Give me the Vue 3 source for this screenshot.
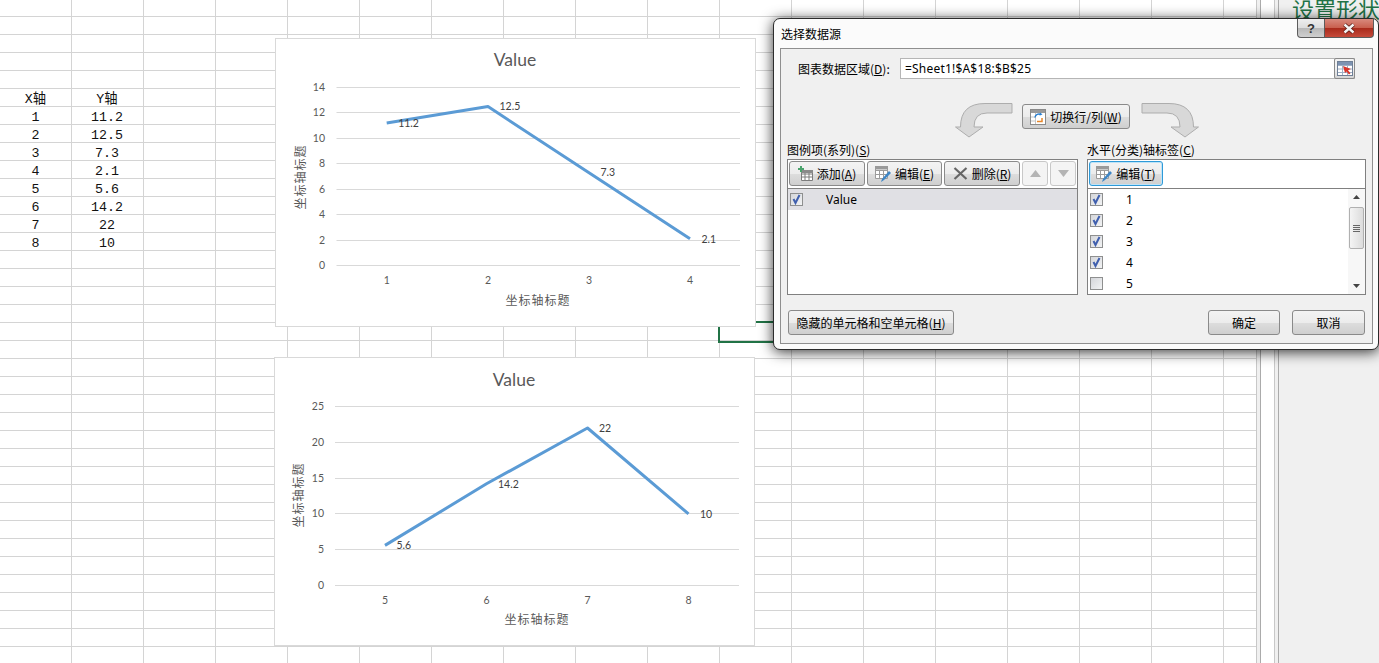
<script setup>
const rows = [
  ['X轴', 'Y轴'], ['1', '11.2'], ['2', '12.5'], ['3', '7.3'], ['4', '2.1'],
  ['5', '5.6'], ['6', '14.2'], ['7', '22'], ['8', '10']
]

function build(cls, cfg) {
  const y = v => cfg.y0 - (v / cfg.max) * (cfg.y0 - cfg.yTop)
  const pts = cfg.values.map((v, i) => ({ x: cfg.xs[i], y: y(v), v, cat: cfg.cats[i] }))
  const ticks = []
  for (let t = 0; t <= cfg.max; t += cfg.step) ticks.push({ t, y: Math.floor(y(t)) + 0.5 })
  return { cls, ...cfg, pts, ticks, line: pts.map(p => `${p.x},${p.y.toFixed(1)}`).join(' ') }
}

const charts = [
  build('chart-a', {
    max: 14, step: 2, y0: 226.5, yTop: 48.5, left: 60.5, right: 464, titleY: 27, catY: 241, nameX: 25, nameY: 138,
    xs: [110.7, 212, 313, 414], values: [11.2, 12.5, 7.3, 2.1], cats: [1, 2, 3, 4]
  }),
  build('chart-b', {
    max: 25, step: 5, y0: 227.5, yTop: 48.5, left: 60, right: 464, titleY: 28, catY: 242, nameX: 24, nameY: 137,
    xs: [110, 211.5, 312.5, 413.5], values: [5.6, 14.2, 22, 10], cats: [5, 6, 7, 8]
  })
]

const axisItems = [
  { n: 1, on: true }, { n: 2, on: true }, { n: 3, on: true }, { n: 4, on: true }, { n: 5, on: false }
]
</script>

<template>
  <div class="app">
    <div class="sheet">
      <div class="cells">
        <template v-for="(r, i) in rows" :key="i">
          <div class="cell">{{ r[0] }}</div>
          <div class="cell">{{ r[1] }}</div>
        </template>
      </div>
    </div>
    <div class="splitter"><div class="splitter-in"></div></div>
    <aside class="pane"><h2 class="pane-title">设置形状格式</h2></aside>

    <div class="selection"></div>

    <div v-for="c in charts" :key="c.cls" class="chart" :class="c.cls">
      <svg width="481" height="287" class="plot">
        <text x="239" :y="c.titleY" text-anchor="middle" class="c-title">Value</text>
        <g v-for="t in c.ticks" :key="t.t">
          <line :x1="c.left" :x2="c.right" :y1="t.y" :y2="t.y" stroke="#d9d9d9" />
          <text x="49" :y="t.y - 0.5" dy=".36em" text-anchor="end" class="c-axis">{{ t.t }}</text>
        </g>
        <polyline :points="c.line" fill="none" stroke="#5b9bd5" stroke-width="3" stroke-linejoin="round" />
        <g v-for="p in c.pts" :key="p.cat">
          <text :x="p.x" :y="c.catY" dy=".36em" text-anchor="middle" class="c-axis">{{ p.cat }}</text>
          <text :x="p.x + 11.5" :y="p.y" dy=".36em" class="c-data">{{ p.v }}</text>
        </g>
        <text x="262" y="262" dy=".36em" text-anchor="middle" class="c-name">坐标轴标题</text>
        <text :transform="`translate(${c.nameX} ${c.nameY}) rotate(-90)`" dy=".36em" text-anchor="middle" class="c-name">坐标轴标题</text>
      </svg>
    </div>

    <section class="dialog">
      <header class="titlebar">
        <span class="dlg-title">选择数据源</span>
        <div class="caption">
          <span class="cap-help">?</span>
          <span class="cap-close">
            <svg width="14" height="11" viewBox="0 0 14 11"><path d="M2.500 1.500l9 8M11.500 1.500l-9 8" fill="none" stroke="#5a1a14" stroke-width="4" /><path d="M2.500 1.500l9 8M11.500 1.500l-9 8" fill="none" stroke="#f4f4f4" stroke-width="2.400" /></svg>
          </span>
        </div>
      </header>
      <div class="body">
        <div class="range-row">
          <label class="range-label">图表数据区域(<u>D</u>):</label>
          <div class="range-field">
            <span class="range-value">=Sheet1!$A$18:$B$25</span>
            <span class="range-btn">
              <svg width="16" height="15" viewBox="0 0 16 15">
                <rect x=".5" y=".5" width="15" height="14" fill="#fff" stroke="#6f7f96" />
                <path d="M1 4.500h14M1 8h14M1 11.500h14M5.500 1v13M10.500 1v13" stroke="#9fb0c6" />
                <rect x="1" y="1" width="14" height="3" fill="#7d93b2" />
                <path d="M6 5l8 3-3 1.200 2.500 3-1.500 1.200-2.500-3L8 12z" fill="#d9352a" />
              </svg>
            </span>
          </div>
        </div>

        <div class="swap-row">
          <svg class="swap-arrow" width="58" height="35" viewBox="0 0 58 35">
            <path d="M57 .5V10H32Q19 10 19 24H28L14 34 .5 24H5.500Q5.500 .5 30 .500Z" fill="#d8d8d8" stroke="#adadad" />
          </svg>
          <button class="btn swap-btn">
            <svg width="16" height="16" viewBox="0 0 16 16">
              <rect x=".5" y=".5" width="15" height="15" fill="#fff" stroke="#8a8a8a" />
              <rect x="1" y="1" width="14" height="3" fill="#9a9a9a" />
              <path d="M1 8h4M1 12h4M5.500 4v11" stroke="#c4c4c4" />
              <path d="M5 8.500a4 4 0 0 1 6-3" fill="none" stroke="#2a7fd0" stroke-width="1.500" />
              <path d="M10 3.500l2.500 2-3 1z" fill="#2a7fd0" />
              <path d="M12 9v3.500H7" fill="none" stroke="#e8862a" stroke-width="1.500" />
            </svg>
            <span>切换行/列(<u>W</u>)</span>
          </button>
          <svg class="swap-arrow" width="58" height="35" viewBox="0 0 58 35">
            <g transform="translate(58 0) scale(-1 1)">
              <path d="M57 .5V10H32Q19 10 19 24H28L14 34 .5 24H5.500Q5.500 .5 30 .500Z" fill="#d8d8d8" stroke="#adadad" />
            </g>
          </svg>
        </div>

        <div class="lists">
          <div class="col col-left">
            <div class="col-label">图例项(系列)(<u>S</u>)</div>
            <div class="panel">
              <div class="toolbar">
                <button class="btn tool w76">
                  <svg width="15" height="15" viewBox="0 0 15 15">
                    <path d="M3.500 4.500h11v10h-11zM3.500 8h11M3.500 11h11M7 5v9M11 5v9" fill="#fff" stroke="#7c7c7c" />
                    <rect x="3" y="4" width="12" height="3" fill="#8a8a8a" />
                    <path d="M3 0v6M0 3h6" stroke="#4aa36c" stroke-width="2" />
                  </svg>
                  <span>添加(<u>A</u>)</span>
                </button>
                <button class="btn tool w75">
                  <svg width="16" height="16" viewBox="0 0 16 16">
                    <path d="M.5 .5h12v12H.5zM.5 4.500h12M.5 8.500h12M4.500 5v8M8.500 5v8" fill="#fff" stroke="#9b9b9b" />
                    <rect x="0" y="0" width="13" height="3.500" fill="#9a9a9a" />
                    <path d="M14 5l2 2-7 7-3 2 1-3z" fill="#3e86c6" />
                  </svg>
                  <span>编辑(<u>E</u>)</span>
                </button>
                <button class="btn tool w76">
                  <svg width="15" height="13" viewBox="0 0 15 13"><path d="M1.500 1l12 11M13.500 1l-12 11" stroke="#666" stroke-width="2.200" /></svg>
                  <span>删除(<u>R</u>)</span>
                </button>
                <button class="btn-dis"><svg width="11" height="7" viewBox="0 0 11 7"><path d="M5.500 0L11 7H0z" fill="#b4b4b4" /></svg></button>
                <button class="btn-dis"><svg width="11" height="7" viewBox="0 0 11 7"><path d="M0 0h11L5.500 7z" fill="#b4b4b4" /></svg></button>
              </div>
              <div class="list">
                <div class="item selected">
                  <span class="check">
                    <svg width="11" height="11" viewBox="0 0 11 11"><path d="M2.500 5l2 4 4-8" fill="none" stroke="#3f5fae" stroke-width="2" /></svg>
                  </span>
                  <span class="item-text">Value</span>
                </div>
              </div>
            </div>
          </div>

          <div class="col col-right">
            <div class="col-label">水平(分类)轴标签(<u>C</u>)</div>
            <div class="panel">
              <div class="toolbar">
                <button class="btn tool w74 focused">
                  <svg width="16" height="16" viewBox="0 0 16 16">
                    <path d="M.5 .5h12v12H.5zM.5 4.500h12M.5 8.500h12M4.500 5v8M8.500 5v8" fill="#fff" stroke="#9b9b9b" />
                    <rect x="0" y="0" width="13" height="3.500" fill="#9a9a9a" />
                    <path d="M14 5l2 2-7 7-3 2 1-3z" fill="#3e86c6" />
                  </svg>
                  <span>编辑(<u>T</u>)</span>
                </button>
              </div>
              <div class="list list-scroll">
                <div class="list-items">
                  <div v-for="a in axisItems" :key="a.n" class="item item-axis">
                    <span class="check">
                      <svg v-if="a.on" width="11" height="11" viewBox="0 0 11 11"><path d="M2.500 5l2 4 4-8" fill="none" stroke="#3f5fae" stroke-width="2" /></svg>
                    </span>
                    <span class="item-num">{{ a.n }}</span>
                  </div>
                </div>
                <div class="scrollbar">
                  <svg class="sb-arrow" width="7" height="4" viewBox="0 0 7 4"><path d="M3.500 0L7 4H0z" fill="#444" /></svg>
                  <div class="sb-thumb"><i></i><i></i><i></i><i></i></div>
                  <svg class="sb-arrow sb-down" width="7" height="4" viewBox="0 0 7 4"><path d="M0 0h7L3.500 4z" fill="#444" /></svg>
                </div>
              </div>
            </div>
          </div>
        </div>

        <div class="footer">
          <button class="btn foot-hidden"><span>隐藏的单元格和空单元格(<u>H</u>)</span></button>
          <div class="foot-actions">
            <button class="btn foot-ok">确定</button>
            <button class="btn foot-cancel">取消</button>
          </div>
        </div>
      </div>
    </section>
  </div>
</template>

<style>
html, body { margin: 0; overflow: hidden; background: #fff; }
</style>

<style scoped>
.app {
  position: relative;
  width: 1379px;
  height: 663px;
  display: flex;
  overflow: hidden;
  font-family: "Noto Sans CJK SC", "Noto Sans", sans-serif;
  background: #fff;
}
.sheet {
  width: 1256px;
  height: 100%;
  flex: none;
  box-sizing: border-box;
  padding-top: 91px;
  background-image:
    linear-gradient(#d4d4d4 1px, transparent 1px),
    linear-gradient(90deg, #d4d4d4 1px, transparent 1px);
  background-size: 100% 18px, 72px 100%;
  background-position: 0 16px, 71px 0;
}
.cells {
  display: grid;
  grid-template-columns: 71px 72px;
  grid-auto-rows: 18px;
}
.cell {
  text-align: center;
  font-family: "Liberation Mono", "Noto Sans CJK SC", monospace;
  font-size: 13.3px;
  line-height: 18px;
  color: #111;
}
.splitter {
  width: 23px;
  flex: none;
  box-sizing: border-box;
  background: #f0f0f0;
  border-left: 1px solid #c8c8c8;
  border-right: 1px solid #ababab;
  padding: 0 3px;
}
.splitter-in {
  height: 100%;
  background: #fff;
  border-left: 1px solid #ababab;
  border-right: 1px solid #c8c8c8;
}
.pane {
  flex: 1;
  background: #f0f0f0;
  overflow: hidden;
}
.pane-title {
  margin: -2px 0 0 13px;
  font-size: 22px;
  font-weight: 400;
  line-height: 20px;
  white-space: nowrap;
  color: #217346;
}
.selection {
  position: absolute;
  left: 718px;
  top: 321px;
  width: 120px;
  height: 18px;
  border: 2px solid #217346;
}
.chart {
  position: absolute;
  width: 481px;
  height: 289px;
  box-sizing: border-box;
  background: #fff;
  border: 1px solid #d9d9d9;
}
.chart-a { left: 275px; top: 38px; }
.chart-b { left: 274px; top: 357px; }
.plot { display: block; }
.c-title { font: 17.5px Lato, sans-serif; fill: #595959; }
.c-axis { font: 10.500px Lato, sans-serif; fill: #595959; }
.c-data { font: 10.500px Lato, sans-serif; fill: #404040; }
.c-name { font: 12px "Noto Sans CJK SC", sans-serif; letter-spacing: 1px; fill: #595959; }

.dialog {
  position: absolute;
  left: 773px;
  top: 18px;
  width: 606px;
  height: 332px;
  box-sizing: border-box;
  border: 1px solid #2c2c2c;
  border-radius: 7px;
  background: #fbfbfb;
  box-shadow: 0 2px 14px rgba(0, 0, 0, 0.8);
  padding: 0 5px 6px 6px;
  color: #000;
  font-size: 12px;
}
.titlebar {
  height: 29px;
  display: flex;
  align-items: flex-start;
  justify-content: space-between;
  position: relative;
}
.dlg-title {
  margin: 6px 0 0 1px;
  line-height: 18px;
}
.caption {
  position: absolute;
  left: 517px;
  top: 0;
  display: flex;
  height: 19px;
}
.cap-help, .cap-close {
  display: flex;
  align-items: center;
  justify-content: center;
  box-sizing: border-box;
  height: 19px;
  border: 1px solid #5c5c5c;
  border-top: 0;
}
.cap-help {
  width: 28px;
  border-radius: 0 0 0 4px;
  background: linear-gradient(#eeeeee 0, #dcdcdc 50%, #b8b8b8 52%, #cfcfcf 100%);
  color: #333;
  font-family: "Liberation Sans", sans-serif;
  font-weight: 700;
  font-size: 13px;
}
.cap-close {
  width: 49px;
  border-left: 0;
  border-radius: 0 0 4px 0;
  background: linear-gradient(#d88a7e 0, #c9604f 48%, #a92b1c 52%, #c64a3a 100%);
}
.body {
  width: 593px;
  height: 296px;
  box-sizing: border-box;
  border: 1px solid #8f8f8f;
  background: #f0f0f0;
  display: flex;
  flex-direction: column;
}
.range-row {
  display: flex;
  align-items: center;
  margin: 9px 0 0 17px;
  height: 21px;
}
.range-label { width: 102px; }
u { text-decoration: underline; text-underline-offset: 1px; }
.range-field {
  width: 455px;
  height: 21px;
  box-sizing: border-box;
  display: flex;
  align-items: center;
  justify-content: space-between;
  background: #fff;
  border: 1px solid #b5b5b5;
}
.range-value { margin-left: 4px; font-family: "Noto Sans", sans-serif; letter-spacing: .2px; }
.range-btn {
  width: 21px;
  height: 21px;
  margin: -1px -1px -1px 0;
  box-sizing: border-box;
  display: flex;
  align-items: center;
  justify-content: center;
  border: 1px solid #8a8a8a;
  border-radius: 2px;
  background: linear-gradient(#f2f2f2 50%, #d5d5d5);
}
.swap-row {
  display: flex;
  align-items: flex-start;
  margin: 24px 0 0 174px;
  height: 35px;
}
.swap-arrow { flex: none; display: block; }
.btn {
  box-sizing: border-box;
  padding: 0;
  display: flex;
  align-items: center;
  justify-content: center;
  gap: 4px;
  font: inherit;
  color: #000;
  white-space: nowrap;
  border: 1px solid #8a8a8a;
  border-radius: 3px;
  background: linear-gradient(#f3f3f3 0, #ececec 50%, #dddddd 52%, #cfcfcf 100%);
}
.swap-btn {
  width: 108px;
  height: 25px;
  margin: 1px 11px 0 9px;
}
.lists {
  display: flex;
  gap: 9px;
  margin: 4px 0 0 6px;
}
.col-left { width: 291px; }
.col-right { width: 279px; }
.col-label { height: 17px; line-height: 15px; }
.panel {
  height: 136px;
  box-sizing: border-box;
  border: 1px solid #808080;
  background: #fff;
}
.toolbar {
  height: 29px;
  box-sizing: border-box;
  padding: 1px 1px 0;
  display: flex;
  gap: 2px;
  border-bottom: 1px solid #808080;
}
.tool { height: 25px; }
.w76 { width: 76px; }
.w75 { width: 75px; }
.w74 { width: 74px; }
.focused { border-color: #2e9ad8; box-shadow: inset 0 0 0 1px #bfe3f7; }
.btn-dis {
  width: 26px;
  height: 25px;
  padding: 0;
  box-sizing: border-box;
  display: flex;
  align-items: center;
  justify-content: center;
  border: 1px solid #c8c8c8;
  border-radius: 3px;
  background: #f4f4f4;
}
.list { height: 105px; }
.list-scroll { display: flex; }
.list-items { flex: 1; }
.item {
  height: 21px;
  display: flex;
  align-items: center;
  padding-left: 2px;
}
.selected { background: #e0e0e4; }
.check {
  width: 13px;
  height: 13px;
  flex: none;
  box-sizing: border-box;
  display: flex;
  align-items: center;
  justify-content: center;
  border: 1px solid #8e8f8f;
  background: linear-gradient(135deg, #d4d6da, #f2f3f4);
}
.item-text { margin-left: 23px; font-family: "Noto Sans", sans-serif; }
.item-num { margin-left: 23px; font-family: "Noto Sans", sans-serif; }
.scrollbar {
  width: 17px;
  flex: none;
  background: #f7f7f7;
  display: flex;
  flex-direction: column;
  align-items: center;
}
.sb-arrow { display: block; margin-top: 6px; flex: none; }
.sb-down { margin-top: 35px; }
.sb-thumb {
  width: 15px;
  height: 42px;
  margin-top: 8px;
  box-sizing: border-box;
  border: 1px solid #b0b0b0;
  border-radius: 2px;
  background: linear-gradient(90deg, #f4f4f4, #dcdcdc);
  display: flex;
  flex-direction: column;
  align-items: center;
  justify-content: center;
  gap: 1px;
}
.sb-thumb i {
  display: block;
  width: 7px;
  height: 1px;
  background: #666;
}
.footer {
  display: flex;
  justify-content: space-between;
  margin-top: 15px;
  padding: 0 7px;
}
.foot-hidden { width: 166px; height: 25px; }
.foot-actions { display: flex; gap: 12px; }
.foot-ok { width: 72px; height: 25px; }
.foot-cancel { width: 73px; height: 25px; }
</style>
